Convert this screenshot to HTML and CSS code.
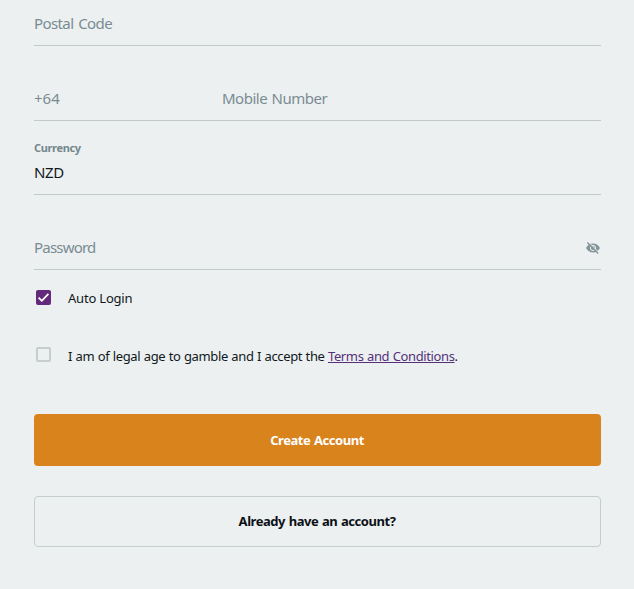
FILE: index.html
```html
<!DOCTYPE html>
<html lang="en">
<head>
    <meta charset="UTF-8">
    <meta name="viewport" content="width=device-width, initial-scale=1.0">
    <title>Create Account</title>
    <link rel="stylesheet" href="styles.css">
</head>
<body>

    <form class="signup">
        <div class="field field-first">
            <span class="placeholder postal">Postal Code</span>
        </div>
        <div class="field phone">
            <span class="placeholder prefix">+64</span>
            <span class="placeholder mobile">Mobile Number</span>
        </div>
        <div class="field currency">
            <span class="label">Currency</span>
            <span class="value">NZD</span>
        </div>
        <div class="field password">
            <span class="placeholder pass">Password</span>
            <svg class="eye" viewBox="0 0 14 12">
                <path class="eye-shape" d="M0 6C1.6 2.9 4 1.6 7 1.6S12.4 2.9 14 6C12.4 9.1 10 10.4 7 10.4S1.6 9.1 0 6Z"/>
                <circle class="eye-ring" cx="7" cy="6" r="2.6"/>
                <path class="eye-gap" d="M2.5 0L13 10.6"/>
                <path class="eye-slash" d="M1.4 .6L12.2 11.4"/>
            </svg>
        </div>

        <div class="check check-login">
            <span class="box checked">
                <svg viewBox="0 0 15 15"><path d="M2.6 7.6L5.8 10.8L12.4 3.9"/></svg>
            </span>
            <span class="check-text login-text">Auto Login</span>
        </div>
        <div class="check check-terms">
            <span class="box"></span>
            <span class="check-text terms-text">I am of legal age to gamble and I accept the <a href="#">Terms and Conditions</a>.</span>
        </div>

        <button type="button" class="btn btn-create"><span>Create Account</span></button>
        <button type="button" class="btn btn-login"><span>Already have an account?</span></button>
    </form>

</body>
</html>
```
FILE: styles.css
```css
body {
    margin: 0;
    background-color: #ecf0f1;
    font-family: "Noto Sans", "Open Sans", sans-serif;
    color: #111820;
    overflow: hidden;
}
.signup {
    display: flex;
    flex-direction: column;
    padding: 0 33px 0 34px;
}
.field {
    box-sizing: border-box;
    height: 75px;
    display: flex;
    align-items: flex-end;
    padding-bottom: 12px;
    border-bottom: 1px solid #c3cacd;
    font-size: 15px;
    line-height: 20px;
    white-space: nowrap;
}
.field-first {
    height: 46px;
}
.placeholder {
    color: #7a8c91;
}
.postal {
    letter-spacing: -0.6px;
    word-spacing: 1.5px;
}
.prefix {
    width: 188px;
}
.mobile {
    letter-spacing: -0.5px;
    word-spacing: 1px;
}
.pass {
    letter-spacing: -0.8px;
}
.currency {
    height: 74px;
    flex-direction: column;
    align-items: flex-start;
    justify-content: flex-end;
}
.label {
    font-size: 11px;
    font-weight: bold;
    line-height: 16px;
    letter-spacing: -0.35px;
    margin-bottom: 6px;
    color: #74878c;
}
.value {
    letter-spacing: -0.4px;
}
.password {
    justify-content: space-between;
}
.eye {
    width: 14px;
    height: 12px;
    margin: 0 1px 3px 0;
}
.eye-shape {
    fill: #849599;
}
.eye-ring {
    fill: none;
    stroke: #ecf0f1;
    stroke-width: 1;
}
.eye-gap {
    stroke: #ecf0f1;
    stroke-width: 1;
}
.eye-slash {
    stroke: #849599;
    stroke-width: 1.4;
}
.check {
    display: flex;
    align-items: flex-start;
    padding-left: 2px;
    font-size: 13px;
    line-height: 18px;
    white-space: nowrap;
}
.check-login {
    height: 37px;
    padding-top: 20px;
}
.check-terms {
    height: 67px;
    padding-top: 20px;
}
.login-text {
    margin-top: -1px;
    letter-spacing: -0.2px;
}
.terms-text {
    letter-spacing: -0.38px;
    word-spacing: 0.5px;
}
.box {
    box-sizing: border-box;
    width: 15px;
    height: 15px;
    margin-right: 17px;
    border: 2px solid #c6cdcf;
    border-radius: 2px;
}
.box.checked {
    border: none;
    background-color: #63297a;
}
.box svg {
    display: block;
    fill: none;
    stroke: #fff;
    stroke-width: 1.8;
}
.check a {
    color: #55307a;
}
.btn {
    box-sizing: border-box;
    border: none;
    border-radius: 4px;
    padding: 0 1px 0 0;
    font-family: inherit;
    font-size: 13px;
    font-weight: bold;
    line-height: 18px;
    letter-spacing: -0.45px;
    word-spacing: 0.7px;
}
.btn-create {
    height: 52px;
    background-color: #d8831c;
    color: #fff;
}
.btn-login {
    height: 51px;
    margin-top: 30px;
    padding-bottom: 2px;
    border: 1px solid #c6cdcf;
    background-color: transparent;
    color: #0c1016;
}
```
